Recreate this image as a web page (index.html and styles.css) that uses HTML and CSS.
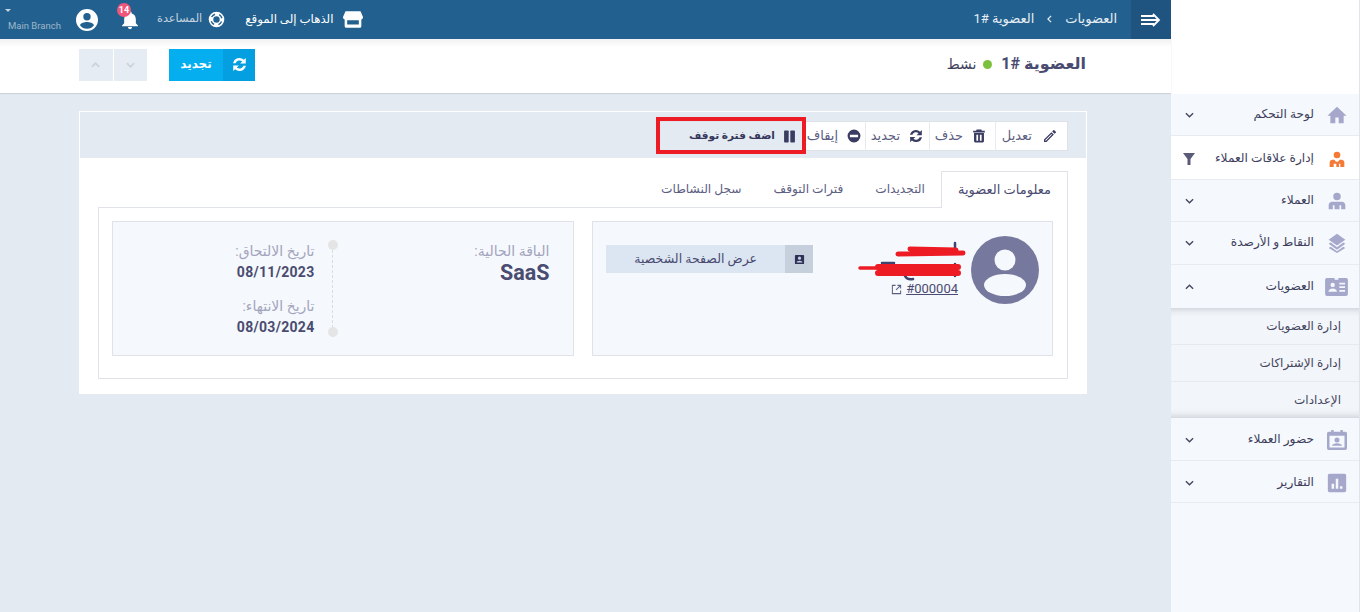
FILE: index.html
```html
<!DOCTYPE html>
<html lang="ar" dir="rtl">
<head>
<meta charset="utf-8">
<title>العضوية #1</title>
<link rel="stylesheet" href="styles.css">
</head>
<body>
<aside class="sidebar">
  <div class="side-top"></div>
  <nav class="menu">
    <a class="item tint short"><svg class="mi" viewBox="0 0 24 24"><path d="M10 22v-7h4v7h6v-9h3.500L12 2 .500 13H4v9z"/></svg><span class="label">لوحة التحكم</span><svg class="chev" viewBox="0 0 10 6"><path d="M1 1l4 4 4-4"/></svg></a>
    <a class="item white nudge"><svg class="mi orange" viewBox="0 0 24 24"><circle cx="12" cy="6" r="5"/><path d="M1 24v-7c0-2 2-4 4-4h3l2.500 3h3l2.500-3h3c2 0 4 2 4 4v7h-6v-5h-2v5h-4v-5H7v5z"/></svg><span class="label">إدارة علاقات العملاء</span><svg class="filter" viewBox="0 0 14 14"><path d="M1 1h12L8.500 7v6h-3V7z"/></svg></a>
    <a class="item tint short"><svg class="mi" viewBox="0 0 24 24"><circle cx="12" cy="6.500" r="4.500"/><path d="M2 22v-5c0-2 2-4 4-4h12c2 0 4 2 4 4v5h-5v-5h-2v5h-6v-5H7v5z"/></svg><span class="label">العملاء</span><svg class="chev" viewBox="0 0 10 6"><path d="M1 1l4 4 4-4"/></svg></a>
    <a class="item tint"><svg class="mi" viewBox="0 0 24 24"><path d="M12 1l10 7-10 7L2 8zM4.500 11.500L12 17l7.500-5.500L22 13l-10 7-10-7zM4.500 16.500L12 22l7.500-5.500L22 18l-10 6-10-6z"/></svg><span class="label">النقاط و الأرصدة</span><svg class="chev" viewBox="0 0 10 6"><path d="M1 1l4 4 4-4"/></svg></a>
    <a class="item tint open"><svg class="mi wide" viewBox="0 0 24 20"><path d="M2 1h8v2h4V1h8a2 2 0 012 2v15a2 2 0 01-2 2H2a2 2 0 01-2-2V3a2 2 0 012-2zm6 5a2.300 2.300 0 100 4.600A2.300 2.300 0 008 6zm-4.500 9.500h9c0-2-2-3.400-4.500-3.400s-4.500 1.400-4.500 3.400zM15 6v1.800h6V6zm0 3.800v1.800h6V9.800zm0 3.800v1.800h6v-1.800z" fill-rule="evenodd"/></svg><span class="label">العضويات</span><svg class="chev" viewBox="0 0 10 6"><path d="M1 5l4-4 4 4"/></svg></a>
    <div class="submenu">
      <a class="sub">إدارة العضويات</a>
      <a class="sub">إدارة الإشتراكات</a>
      <a class="sub last">الإعدادات</a>
    </div>
    <a class="item tint nudge"><svg class="mi" viewBox="0 0 24 24"><path d="M5 0h3v2h8V0h3v2h3a2 2 0 012 2v18a2 2 0 01-2 2H2a2 2 0 01-2-2V4a2 2 0 012-2h3zM3 7v14h18V7zm9 2a3 3 0 110 6 3 3 0 010-6zm-6 10c0-2 3-3.200 6-3.200s6 1.200 6 3.200z" fill-rule="evenodd"/></svg><span class="label">حضور العملاء</span><svg class="chev" viewBox="0 0 10 6"><path d="M1 1l4 4 4-4"/></svg></a>
    <a class="item tint short nudge"><svg class="mi" viewBox="0 0 24 24"><path d="M3 1h18a2 2 0 012 2v18a2 2 0 01-2 2H3a2 2 0 01-2-2V3a2 2 0 012-2zm2.500 12v6h3v-6zm5-6v12h3V7zm5 9v3h3v-3z" fill-rule="evenodd"/></svg><span class="label">التقارير</span><svg class="chev" viewBox="0 0 10 6"><path d="M1 1l4 4 4-4"/></svg></a>
  </nav>
</aside>

<div class="main">
  <header class="topbar">
    <button class="toggle"><svg viewBox="0 0 20 14"><path d="M0 3h13M0 7h17M0 11h13M12 1l6 6-6 6"/></svg></button>
    <div class="crumbs"><span>العضويات</span><svg class="crumb-sep" viewBox="0 0 6 10"><path d="M5 1L1 5l4 4"/></svg><span>العضوية #1</span></div>
    <div class="tools">
      <a class="tool strong"><svg class="store" viewBox="0 0 24 20"><path d="M3 0h18l3 7a3 3 0 01-2 3v8a2 2 0 01-2 2H4a2 2 0 01-2-2v-8a3 3 0 01-2-3zM5 11v5h14v-5z" fill-rule="evenodd"/></svg><span>الذهاب إلى الموقع</span></a>
      <a class="tool help"><svg class="buoy" viewBox="0 0 24 24"><circle class="buoy-disc" cx="12" cy="12" r="11"/><circle class="buoy-gaps" cx="12" cy="12" r="7.750"/><circle class="buoy-hole" cx="12" cy="12" r="4.500"/></svg><span>المساعدة</span></a>
      <a class="bell"><svg viewBox="0 0 24 24"><path d="M12 23a2.500 2.500 0 002.500-2.500h-5A2.500 2.500 0 0012 23zm7-7v-5c0-3.300-1.800-6-5-6.800V3.500a2 2 0 00-4 0v.7C6.800 5 5 7.700 5 11v5l-2.500 2.500V19.500h19v-1z"/></svg><b class="badge">14</b></a>
      <a class="account"><svg viewBox="0 0 24 24"><path d="M12 1a11 11 0 100 22 11 11 0 000-22zm0 4a3.700 3.700 0 110 7.400A3.700 3.700 0 0112 5zm0 15.800a8.600 8.600 0 01-7-3.600c.5-2 4.600-3.100 7-3.100s6.500 1.100 7 3.100a8.600 8.600 0 01-7 3.600z" fill-rule="evenodd"/></svg></a>
      <div class="branch"><span class="caret"></span><span>Main Branch</span></div>
    </div>
  </header>

  <section class="subhead">
    <div class="title"><h1>العضوية #1</h1><i class="dot"></i><span>نشط</span></div>
    <div class="actions">
      <button class="renew"><span class="renew-ic"><svg class="sync" viewBox="0 0 24 24"><use href="#sync"/></svg></span><span class="renew-tx">تجديد</span></button>
      <div class="pager"><button><svg viewBox="0 0 10 6"><path d="M1 1l4 4 4-4"/></svg></button><button><svg viewBox="0 0 10 6"><path d="M1 5l4-4 4 4"/></svg></button></div>
    </div>
  </section>

  <main class="content">
    <section class="panel">
      <div class="panel-head">
        <div class="toolbar">
          <a class="act-edit"><svg viewBox="0 0 24 24"><path d="M3 17.200V21h3.800L17.800 9.900l-3.700-3.700zM5.900 19H5v-.9L14.100 9l.9.9zM20.700 7a1 1 0 000-1.400l-2.300-2.300a1 1 0 00-1.400 0l-1.800 1.800 3.700 3.700z" fill-rule="evenodd"/></svg><span>تعديل</span></a>
          <a class="act-del"><svg viewBox="0 0 24 24"><path d="M8 1h8l1 2h5v3H2V3h5zM3.500 7h17v14a2 2 0 01-2 2h-13a2 2 0 01-2-2zm4 3v10h3V10zm6 0v10h3V10z" fill-rule="evenodd"/></svg><span>حذف</span></a>
          <a class="act-renew"><svg viewBox="0 0 24 24"><use href="#sync"/></svg><span>تجديد</span></a>
          <a class="act-stop"><svg viewBox="0 0 24 24"><path d="M12 1a11 11 0 100 22 11 11 0 000-22zM5 10h14v4H5z" fill-rule="evenodd"/></svg><span>إيقاف</span></a>
          <a class="pause"><svg viewBox="0 0 24 24"><rect x="2" y="1" width="8.500" height="22" rx="1.500"/><rect x="13.500" y="1" width="8.500" height="22" rx="1.500"/></svg><span>اضف فترة توقف</span></a>
        </div>
        <div class="highlight"></div>
      </div>
      <div class="tabs">
        <a class="tab active">معلومات العضوية</a>
        <a class="tab">التجديدات</a>
        <a class="tab">فترات التوقف</a>
        <a class="tab">سجل النشاطات</a>
      </div>
      <div class="tab-body">
        <article class="card member">
          <svg class="avatar" viewBox="0 0 68 68"><circle cx="34" cy="34" r="34" fill="#77789e"/><circle cx="34" cy="24" r="10.500" fill="#f5f8fc"/><ellipse cx="34" cy="49" rx="21" ry="11" fill="#f5f8fc"/></svg>
          <div class="who">
            <svg class="scribble" viewBox="0 0 110 50"><path class="ink" d="M97 3V12M24 23h12M47 36q2 4 8 3M97 24v12"/><path class="red-a" d="M40 14L105 13M52 9L98 10"/><path class="red-b" d="M20 27H100M20 33H100"/><path class="red-c" d="M2 28H22"/></svg>
            <a class="mid"><span>#000004</span><svg viewBox="0 0 24 24"><path d="M10 3H3v18h18v-7M14 3h7v7M21 3L11 13"/></svg></a>
          </div>
          <a class="profile"><span class="p-ic"><svg viewBox="0 0 24 24"><path d="M4 2h16a2 2 0 012 2v16a2 2 0 01-2 2H4a2 2 0 01-2-2V4a2 2 0 012-2zm8 3.500a3.500 3.500 0 100 7 3.500 3.500 0 000-7zM5.500 18.500h13c0-2.500-3.500-4-6.500-4s-6.500 1.500-6.500 4z" fill-rule="evenodd"/></svg></span><span class="p-tx">عرض الصفحة الشخصية</span></a>
        </article>
        <article class="card plan">
          <div class="plan-name"><span class="cap">الباقة الحالية:</span><strong>SaaS</strong></div>
          <div class="line"></div>
          <div class="dates">
            <span class="cap">تاريخ الالتحاق:</span><b>08/11/2023</b>
            <span class="cap second">تاريخ الانتهاء:</span><b>08/03/2024</b>
          </div>
        </article>
      </div>
    </section>
  </main>
</div>
<svg class="defs" aria-hidden="true"><symbol id="sync" viewBox="0 0 24 24"><path d="M22 1.500V10.500h-9l3.300-3.300A6.500 6.500 0 005.800 10H1.800A10.300 10.300 0 0119 4.500zM2 22.500V13.500h9l-3.300 3.300A6.500 6.500 0 0018.200 14h4A10.300 10.300 0 015 19.500z"/></symbol></svg>
</body>
</html>
```
FILE: styles.css
```css
* { box-sizing: border-box; }
html, body { height: 100%; }
body {
  margin: 0;
  height: 612px;
  overflow: hidden;
  display: flex;
  background: #e4eaf2;
  color: #4a4b70;
  font: 13px/1.3 Roboto, "Noto Sans", "DejaVu Sans", sans-serif;
}
a { color: inherit; text-decoration: none; }
button { border: 0; padding: 0; font: inherit; cursor: pointer; }
.defs { position: absolute; width: 0; height: 0; }

.sidebar { width: 189px; flex: none; background: #f5f8fc; border-right: 1px solid #dfe4ea; }
.side-top { height: 94px; background: #fff; }
.menu { display: flex; flex-direction: column; }
.item {
  height: 43px;
  display: flex;
  align-items: center;
  padding: 0 12px 0 14px;
  border-bottom: 1px solid #e8ecf1;
  color: #3d3e5c;
}
.item.short { height: 42px; }
.item.white { height: 44px; background: #fff; }
.item.nudge { padding-top: 2px; }
.mi { width: 20px; height: 20px; fill: #a5a8cb; flex: none; }
.mi.orange { fill: #f47a35; width: 16px; height: 16px; margin-inline: 2px; }
.mi.wide { width: 23px; height: 19px; margin-inline: -1px -2px; }
.label { margin-inline-start: 13px; flex: 1; font-size: 12.200px; }
.chev { width: 9px; height: 6px; fill: none; stroke: #45465f; stroke-width: 1.500; flex: none; }
.filter { width: 14px; height: 14px; fill: #5a5b78; flex: none; margin-inline-end: -3px; }
.item.open { border-bottom: 0; }
.submenu { background: #f2f5f9; box-shadow: inset 0 8px 8px -8px #b8bdc5, inset 0 -8px 8px -8px #b8bdc5; }
.sub { display: flex; align-items: center; height: 37px; padding-top: 2px; padding-inline-start: 18px; border-bottom: 1px solid #e6e9ee; font-size: 12px; color: #45465f; }
.sub.last { border-bottom: 0; height: 36px; }

.main { flex: 1; min-width: 0; display: flex; flex-direction: column; }
.topbar { height: 39px; background: #22618f; display: flex; align-items: center; color: #fff; flex: none; }
.toggle { width: 40px; height: 39px; background: #1f5480; display: flex; align-items: center; justify-content: center; flex: none; }
.toggle svg { width: 20px; height: 14px; fill: none; stroke: #fff; stroke-width: 1.800; }
.crumbs { display: flex; align-items: center; gap: 13px; margin-inline-start: 14px; font-size: 13px; color: #e8eef4; }
.crumb-sep { width: 5px; height: 8px; fill: none; stroke: #e8eef4; stroke-width: 1.500; }
.tools { display: flex; align-items: center; margin-inline-start: auto; padding-inline-end: 8px; }
.tool { display: flex; align-items: center; gap: 8px; font-size: 11.800px; }
.tool.strong { font-weight: 500; gap: 9px; }
.store { width: 20px; height: 17px; fill: #fff; }
.help { margin-inline-start: 20px; gap: 6px; font-size: 11.300px; color: #c5d3df; }
.buoy { width: 17px; height: 17px; }
.buoy-disc { fill: #fff; }
.buoy-hole { fill: #22618f; }
.buoy-gaps { fill: none; stroke: #22618f; stroke-width: 2; stroke-dasharray: 6 6.170; stroke-dashoffset: -3.080; }
.bell { position: relative; margin-inline-start: 17px; display: block; height: 20px; }
.bell svg { width: 20px; height: 20px; fill: #fff; display: block; }
.badge {
  position: absolute; top: -7px; right: 9px; width: 14px; height: 14px; border-radius: 50%;
  background: #f0567c; color: #fff; font: 700 9px/14px Roboto, sans-serif; text-align: center;
}
.account { margin-inline-start: 21px; height: 24px; }
.account svg { width: 24px; height: 24px; fill: #fff; display: block; }
.branch { margin-right: 12px; width: 55px; font: 9.500px/11px Roboto, sans-serif; color: #9fb6c9; position: relative; white-space: nowrap; padding-top: 11px; direction: ltr; }
.caret { position: absolute; left: -3px; top: 0; border: 3px solid transparent; border-top-color: #c5d3df; border-bottom: 0; }

.subhead {
  height: 54px; flex: none; display: flex; align-items: center; justify-content: space-between;
  padding: 0 85px 3px 79px; box-shadow: 0 1px 1px #cfd4da; position: relative;
  background: linear-gradient(#f1f1f1, #fff 8px);
}
.title { display: flex; align-items: center; gap: 7px; font-size: 14px; font-weight: 500; color: #3d3e5c; }
h1 { margin: 0; font-size: 16px; font-weight: 700; color: #4a4b70; margin-inline-end: 2px; }
.dot { width: 9px; height: 9px; border-radius: 50%; background: #7cc13b; }
.actions { display: flex; align-items: center; gap: 22px; }
.renew { display: flex; height: 32px; width: 86px; color: #fff; background: #05aeee; font-weight: 700; font-size: 12px; }
.renew-ic { width: 32px; background: #049fe0; display: flex; align-items: center; justify-content: center; }
.sync { width: 15px; height: 15px; fill: #fff; }
.renew-tx { flex: 1; display: flex; align-items: center; justify-content: center; }
.pager { display: flex; gap: 1px; }
.pager button { width: 33.500px; height: 32px; background: #e6ecf4; display: flex; align-items: center; justify-content: center; }
.pager svg { width: 9px; height: 6px; fill: none; stroke: #cfd3d8; stroke-width: 2; }

.content { padding: 18px 84px 0 79px; }
.panel { background: #fff; padding-bottom: 15px; }
.panel-head { position: relative; height: 47px; background: #e4eaf2; border: 1px solid #fff; border-bottom: 0; padding: 9px 18px 0 0; display: flex; }
.toolbar { display: flex; height: 30px; background: #fff; border: 1px solid #dfe3e9; }
.toolbar a { display: flex; align-items: center; gap: 9px; border-left: 1px solid #e8ebf0; font-size: 13px; color: #5c5e82; }
.toolbar a svg { width: 14px; height: 14px; fill: #3a3c62; flex: none; }
.toolbar a.act-edit { width: 72px; padding-inline-start: 9px; gap: 10px; }
.toolbar a.act-edit svg { width: 16px; height: 16px; }
.act-del { width: 66px; padding-inline-start: 9px; }
.act-renew { width: 64px; padding-inline-start: 6px; }
.act-stop { width: 63px; padding-inline-start: 4px; }
.toolbar a.pause { width: 142px; background: #e4eaf2; border-left: 0; gap: 8px; font-weight: 700; font-size: 10.600px; color: #35365a; padding-inline-start: 6px; }
.toolbar a.pause svg { width: 13px; height: 13px; }
.highlight { position: absolute; left: 576px; top: 5px; width: 150px; height: 37px; border: 4px solid #ed1c24; pointer-events: none; }

.tabs { display: flex; padding: 13px 19px 0; margin-bottom: -1px; position: relative; }
.tab { height: 37px; display: flex; align-items: center; padding: 0 15px; font-size: 12.200px; color: #5c5e82; border: 1px solid transparent; border-bottom: 0; }
.tab.active { background: #fff; border-color: #dfe3e9; padding: 0 16px; font-size: 13px; color: #4a4b70; }
.tab-body { margin: 0 19px; height: 172px; border: 1px solid #dfe3e9; padding: 13px 14px 13px 13px; display: grid; grid-template-columns: 1fr 1fr; gap: 18px; }
.card { min-width: 0; background: #f5f8fc; border: 1px solid #dfe3e9; height: 135px; display: flex; }
.member { padding: 14px 13px 0 0; }
.avatar { width: 68px; height: 68px; flex: none; }
.who { position: relative; width: 110px; margin-inline-start: 13px; height: 60px; flex: none; }
.scribble { position: absolute; right: -10px; top: 4px; width: 110px; height: 50px; fill: none; stroke-linecap: round; }
.ink { stroke: #3d4470; stroke-width: 2.500; }
.red-a { stroke: #ed1c24; stroke-width: 5; }
.red-b { stroke: #ed1c24; stroke-width: 6; }
.red-c { stroke: #ed1c24; stroke-width: 3.500; }
.mid { position: absolute; right: 0; top: 46px; display: flex; align-items: center; gap: 4px; font: 13px/14px Roboto, sans-serif; color: #4a4b70; }
.mid span { text-decoration: underline; direction: ltr; }
.mid svg { width: 11px; height: 11px; fill: none; stroke: #5c5e82; stroke-width: 2.200; }
.profile { display: flex; width: 207px; height: 28px; margin-top: 9px; margin-inline-start: 35px; flex: none; }
.p-ic { width: 28px; background: #c5d0dc; display: flex; align-items: center; justify-content: center; flex: none; }
.p-ic svg { width: 11px; height: 11px; fill: #2f3058; }
.p-tx { flex: 1; background: #dbe6f2; display: flex; align-items: center; padding-inline-start: 28px; font-size: 12.500px; color: #4a4b70; }

.plan { padding: 19px 23px 0 23px; }
.cap { display: block; font-size: 14px; line-height: 20px; color: #a3a4bd; }
.plan-name { width: 212px; flex: none; }
.plan-name strong { display: block; font: 700 21.500px/24px Roboto, sans-serif; color: #4a4b70; direction: ltr; text-align: right; }
.line { width: 10px; height: 97px; margin-top: -1px; flex: none; position: relative; background: repeating-linear-gradient(#dcdcdc 0 3px, transparent 3px 5px) center/1px 100% no-repeat; }
.line::before, .line::after { content: ""; position: absolute; left: 0; width: 10px; height: 10px; border-radius: 50%; background: #e5e5e5; }
.line::before { top: 0; }
.line::after { bottom: 0; }
.dates { margin-inline-start: 13px; }
.dates b { display: block; margin-top: 2px; font: 700 14px/18px Roboto, sans-serif; letter-spacing: .3px; color: #4a4b70; direction: ltr; text-align: right; height: 25px; }
.cap.second { margin-top: 8px; }
```
